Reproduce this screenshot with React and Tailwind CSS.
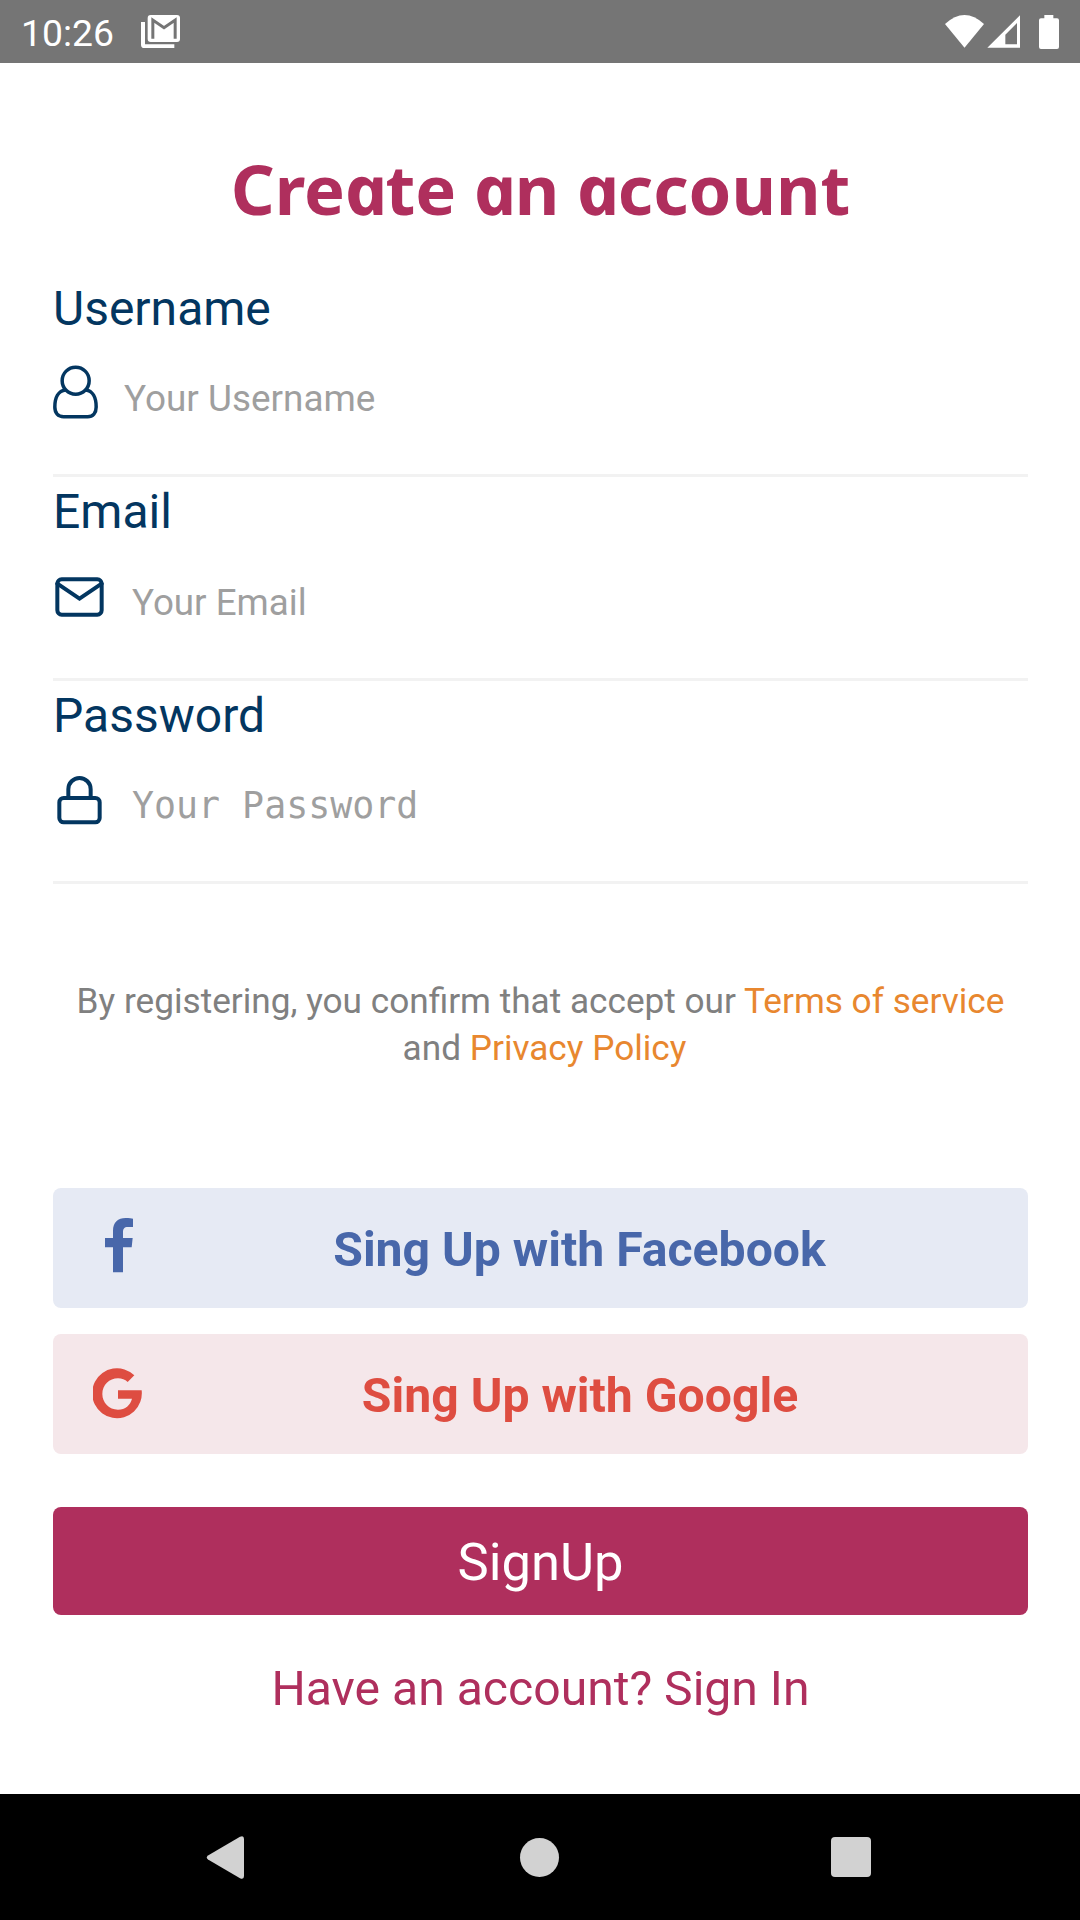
import React from "react";

function StatusBar() {
  return (
    <header className="flex h-[63px] shrink-0 items-center bg-[#757575] pl-[21px] pr-[21px] text-white">
      <span className="w-[120px] pt-[2px] text-[37.3px] leading-[44px]">10:26</span>
      <svg className="h-[33px] w-[39px] shrink-0" viewBox="423 45 117 99">
        <path d="M423 66h12v67h88v11h-90q-10 0-10-10z" fill="#fff" />
        <rect x="443" y="45" width="97" height="81" rx="9" fill="#fff" />
        <path d="M458.500 116V60L492 83L525.500 60V116" fill="none" stroke="#757575" strokeWidth="9" />
      </svg>
      <svg className="ml-auto h-[34px] w-[114px] shrink-0" viewBox="135 42 342 102">
        <path d="M193.500 140L135 69Q193.500 15 252 69Z" fill="#fff" />
        <path d="M262 140L360 43V140ZM316 101V130H351V66Z" fill="#fff" fillRule="evenodd" />
        <path d="M433 52V42H460V52H471q6 0 6 6V138q0 6-6 6H423q-6 0-6-6V58q0-6 6-6Z" fill="#fff" />
      </svg>
    </header>
  );
}

const UserIcon = () => (
  <svg className="h-[54px] w-[45px] shrink-0" viewBox="0 0 135 162" fill="none" stroke="#033660" strokeWidth="10.5">
    <circle cx="68" cy="47" r="40.500" />
    <path d="M38 75C16 77 5.500 98 5.500 126C5.500 144 15 155 32 155H104C120 155 129.500 144 129.500 126C129.500 98 119 77 98 75" />
  </svg>
);

const MailIcon = () => (
  <svg className="h-[54px] w-[51px] shrink-0" viewBox="69 294 153 162" fill="none" stroke="#033660" strokeWidth="12">
    <rect x="82" y="328" width="133" height="106" rx="13" />
    <path d="M82 341L148.500 386L215 341" strokeLinecap="round" />
  </svg>
);

const LockIcon = () => (
  <svg className="h-[54px] w-[51px] shrink-0" viewBox="69 306 153 162" fill="none" stroke="#033660" strokeWidth="12">
    <rect x="88" y="384" width="121" height="73" rx="13" />
    <path d="M115 384V357.500a33.500 33.500 0 0 1 67 0V384" />
  </svg>
);

function Field({ label, placeholder, icon, className, inputClass }) {
  return (
    <section className={"shrink-0 border-b-[3px] border-[#f2f2f2] " + className}>
      <label className="block text-[48px] leading-[64px] text-[#033660]">{label}</label>
      <div className="mt-6 flex h-[54px] items-start">
        {icon}
        <input
          placeholder={placeholder}
          className={"h-[44px] min-w-0 flex-1 bg-transparent p-0 leading-[44px] outline-none placeholder:text-[#9f9f9f] placeholder:opacity-100 " + inputClass}
        />
      </div>
    </section>
  );
}

/* Upright single-storey "a" for the heading. */
const A = () => <span className="inline-block -translate-x-[1px] scale-x-[1.06] skew-x-[12deg] italic">a</span>;

export default function App() {
  return (
    <div className="flex h-[1920px] w-[1080px] flex-col bg-white font-['Roboto',sans-serif]">
      <StatusBar />
      <main className="flex flex-col pl-[53px] pr-[52px]">
        <h1 className="mt-[80px] whitespace-nowrap text-center font-['Noto_Sans',sans-serif] text-[68.6px] font-bold leading-[92px] text-[#af2f5d]">
          Cre<A />te <A />n <A />ccount
        </h1>

        <Field label="Username" placeholder="Your Username" icon={<UserIcon />} className="mt-[42px] h-[200px]" inputClass="ml-[26px] mt-[12px] text-[36.9px]" />
        <Field label="Email" placeholder="Your Email" icon={<MailIcon />} className="mt-[3px] h-[201px]" inputClass="ml-[28px] mt-[13px] text-[36.75px]" />
        <Field label="Password" placeholder="Your Password" icon={<LockIcon />} className="mt-[3px] h-[200px]" inputClass="ml-[28px] mt-[12px] font-['DejaVu_Sans_Mono',monospace] text-[36.6px]" />

        <p className="mt-[94px] whitespace-nowrap text-center text-[35.2px] leading-[47px] text-[#808080]">
          By registering, you confirm that accept our <span className="text-[#e8872f]">Terms of service</span>
          <br />
          <span className="pl-[8px]">and </span>
          <span className="text-[#e8872f]">Privacy Policy</span>
        </p>

        <button className="mt-[116px] flex h-[120px] items-center rounded-[8px] bg-[#e6eaf4] pl-10 pr-[11px] text-[#4867aa]">
          <svg className="h-[60px] w-[49px] shrink-0" viewBox="159 144 147 180" fill="currentColor">
            <path d="M279 146V171H264C252 171 249 177 249 187V204H278L275 232H249V307H219V232H195V204H219V182C219 157 234 144 257 144C267 144 276 145 279 146Z" />
          </svg>
          <span className="flex-1 pt-1 text-center text-[48.15px] font-bold leading-[60px]">Sing Up with Facebook</span>
        </button>
        <button className="mt-[26px] flex h-[120px] items-center rounded-[8px] bg-[#f5e7ea] pl-10 pr-[10px] text-[#de4d41]">
          <svg className="h-[60px] w-[49px] shrink-0" viewBox="159 580 147 180" fill="currentColor">
            <path d="M283 614A74.500 75 0 1 0 305 659H234V684H276C271 703 256 717 234 717C207 717 187 696 187 670C187 643 208 623 234 623C246 623 255 627 263 634Z" />
          </svg>
          <span className="flex-1 pt-1 text-center text-[48.15px] font-bold leading-[60px]">Sing Up with Google</span>
        </button>
        <button className="mt-[53px] h-[108px] rounded-[8px] bg-[#af2f5d] pt-[2px] text-center text-[52.5px] leading-[64px] text-white">
          SignUp
        </button>
        <a className="mt-[42px] text-center text-[48.1px] leading-[64px] text-[#af2f5d]">Have an account? Sign In</a>
      </main>

      <nav className="mt-auto flex h-[126px] shrink-0 items-center bg-black pl-[206px] pr-[209px] text-[#d2d2d2]">
        <svg className="h-[43px] w-[38px]" viewBox="0 0 38 43" fill="currentColor">
          <path d="M34 .8Q38 -1 38 3V40Q38 44 34 42.200L2 23.500Q-.5 21.500 2 19.500Z" />
        </svg>
        <span className="ml-[276px] size-[39px] rounded-full bg-[#d2d2d2]" />
        <span className="ml-auto size-[40px] rounded-[4px] bg-[#d2d2d2]" />
      </nav>
    </div>
  );
}
